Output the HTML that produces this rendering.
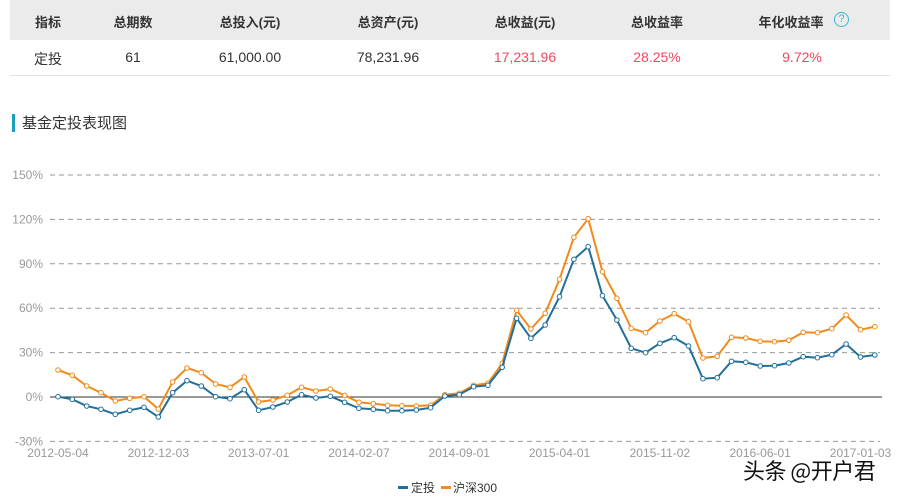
<!DOCTYPE html>
<html><head><meta charset="utf-8"><style>
body{margin:0;width:899px;height:497px;background:#fff;position:relative;overflow:hidden;font-family:"Liberation Sans","Noto Sans CJK SC",sans-serif;}
.hd{position:absolute;left:10px;top:0;width:880px;height:40px;background:#ebebeb;}
.t{position:absolute;font-size:13px;color:#333;white-space:nowrap;transform:translateX(-50%);}
.b{font-weight:bold;top:12px;}
.r{top:49px;font-size:14px;}
.red{color:#f0485e;}
.line{position:absolute;left:10px;top:75px;width:880px;height:1px;background:#e3e3e3;}
svg{position:absolute;left:0;top:0;}
</style></head><body>
<div class="hd"></div>
<div class="t b" style="left:48px">指标</div>
<div class="t b" style="left:133px">总期数</div>
<div class="t b" style="left:250px">总投入(元)</div>
<div class="t b" style="left:388px">总资产(元)</div>
<div class="t b" style="left:525px">总收益(元)</div>
<div class="t b" style="left:657px">总收益率</div>
<div class="t b" style="left:791px">年化收益率</div>
<div style="position:absolute;left:834px;top:12px;width:13px;height:13px;border:1px solid #3bb8d0;border-radius:50%;color:#3bb8d0;font-size:11px;line-height:13px;text-align:center">?</div>
<div class="t r" style="left:48px">定投</div>
<div class="t r" style="left:133px">61</div>
<div class="t r" style="left:250px">61,000.00</div>
<div class="t r" style="left:388px">78,231.96</div>
<div class="t r red" style="left:525px">17,231.96</div>
<div class="t r red" style="left:657px">28.25%</div>
<div class="t r red" style="left:802px">9.72%</div>
<div class="line"></div>
<div style="position:absolute;left:12px;top:114px;width:3px;height:18px;background:#1a9fc0"></div>
<div style="position:absolute;left:22px;top:112px;font-size:15px;color:#333">基金定投表现图</div>
<svg id="s" width="899" height="497"></svg>
<div style="position:absolute;left:743px;top:454px;font-size:22px;color:#111;font-family:'Noto Sans CJK SC',sans-serif;letter-spacing:-0.5px">头条 @开户君</div>
<div style="position:absolute;left:398px;top:486px;width:10px;height:3px;background:#21709b"></div>
<div style="position:absolute;left:411px;top:479px;font-size:12px;color:#333">定投</div>
<div style="position:absolute;left:441px;top:486px;width:10px;height:3px;background:#f28a1c"></div>
<div style="position:absolute;left:453px;top:479px;font-size:12px;color:#333">沪深300</div>
<script>
var s=document.getElementById('s'),h='';
var labs=['150%','120%','90%','60%','30%','0%','-30%'];
for(var i=0;i<7;i++){var y=175+i*44.4;
h+='<text x="43" y="'+(y+4)+'" font-size="12" fill="#999" text-anchor="end" font-family="Liberation Sans">'+labs[i]+'</text>';
if(i==5)h+='<line x1="50" x2="882" y1="'+y+'" y2="'+y+'" stroke="#333" stroke-width="1"/>';
else h+='<line x1="50" x2="880" y1="'+y+'" y2="'+y+'" stroke="#999" stroke-dasharray="5,4"/>';}
var xl=['2012-05-04','2012-12-03','2013-07-01','2014-02-07','2014-09-01','2015-04-01','2015-11-02','2016-06-01','2017-01-03'];
for(i=0;i<9;i++)h+='<text x="'+(58+i*7*14.33)+'" y="457" font-size="12" fill="#999" text-anchor="middle" font-family="Liberation Sans">'+xl[i]+'</text>';
var B=[710,718,738,748,763,751,742,771,698,662,678,710,716,689,751,741,726,704,714,709,727,745,748,752,752,750,743,708];
var O=[630,646,678,698,723,715,710,747,666,624,638,672,682,651,726,720,706,682,693,687,706,727,731,736,737,738,736,704];
var B2=[704,680,676,622,475,535,495,410,298,260,407,480,565,578,550,533,558,656,653,604,607,618,617,609,590,593,584,552,591,585];
var O2=[700,676,670,610,451,507,460,358,232,176,335,415,505,518,483,461,485,594,589,532,534,544,545,541,517,518,506,465,509,500];
function pl(a,b,c){var p=[],all=a.concat(b);for(var k=0;k<all.length;k++)p.push([58+k*14.33,160+all[k]/3]);
var d='<polyline fill="none" stroke="'+c+'" stroke-width="2" points="'+p.map(function(q){return q[0].toFixed(1)+','+q[1].toFixed(1)}).join(' ')+'"/>';
p.forEach(function(q){d+='<circle cx="'+q[0].toFixed(1)+'" cy="'+q[1].toFixed(1)+'" r="2.3" fill="#fff" stroke="'+c+'" stroke-width="1"/>'});return d;}
h+=pl(O,O2,'#f28a1c')+pl(B,B2,'#21709b');
s.innerHTML=h;
</script>
</body></html>
